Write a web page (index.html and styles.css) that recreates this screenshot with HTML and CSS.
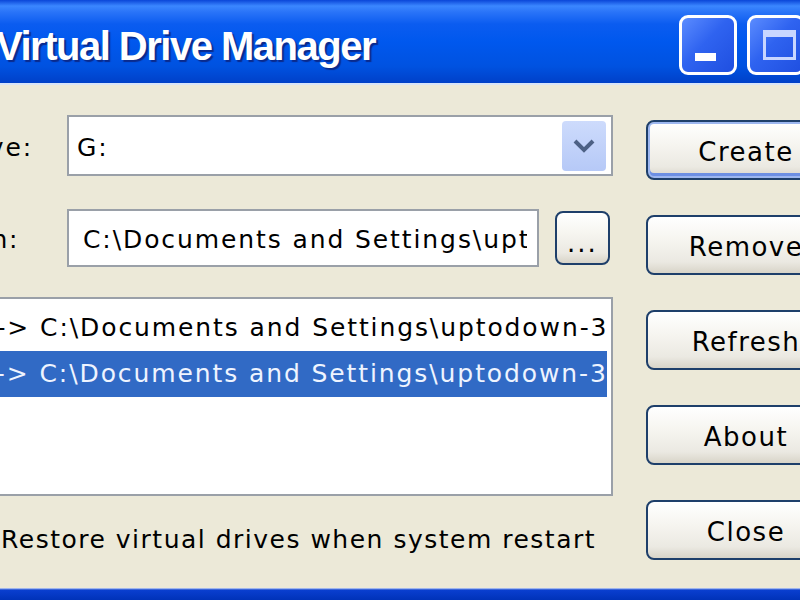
FILE: index.html
```html
<!DOCTYPE html>
<html>
<head>
<meta charset="utf-8">
<link rel="stylesheet" href="styles.css">
</head>
<body>
<div class="window">
  <div class="titlebar">
    <div class="title">Virtual Drive Manager</div>
    <div class="tb-buttons">
      <div class="tb-btn"><span class="min-glyph"></span></div>
      <div class="tb-btn"><span class="max-glyph"></span></div>
      <div class="tb-btn tb-close"></div>
    </div>
  </div>
  <div class="client">
    <div class="form">
      <div class="row row-drive">
        <span class="label">Drive:</span>
        <div class="combo">
          <span class="combo-text">G:</span>
          <span class="drop-btn">
            <svg width="22" height="14" viewBox="0 0 22 14"><path d="M2 2 L11 11 L20 2" fill="none" stroke="#4d6185" stroke-width="4"/></svg>
          </span>
        </div>
      </div>
      <div class="row row-path">
        <span class="label">Path:</span>
        <div class="textbox"><span class="tb-text">C:\Documents and Settings\uptodown-3</span></div>
        <div class="xpbtn small-btn"><span class="dots">...</span></div>
      </div>
      <div class="listbox">
        <div class="item">G: -&gt; C:\Documents and Settings\uptodown-3</div>
        <div class="item selected">H: -&gt; C:\Documents and Settings\uptodown-3</div>
      </div>
      <div class="check-row">
        <span class="checkbox"></span>
        <span class="check-text">Restore virtual drives when system restart</span>
      </div>
    </div>
    <div class="buttons">
      <div class="xpbtn default">Create</div>
      <div class="xpbtn">Remove</div>
      <div class="xpbtn">Refresh</div>
      <div class="xpbtn">About</div>
      <div class="xpbtn">Close</div>
    </div>
  </div>
  <div class="bottom-border"></div>
</div>
</body>
</html>
```
FILE: styles.css
```css
html, body {
  margin: 0;
  padding: 0;
}
body {
  width: 800px;
  height: 600px;
  overflow: hidden;
  background: #ece9d8;
  font-family: "DejaVu Sans", "Liberation Sans", sans-serif;
}
.window {
  width: 950px;
  height: 600px;
  margin-left: -70px;
  display: flex;
  flex-direction: column;
}
.titlebar {
  height: 85px;
  flex: none;
  display: flex;
  align-items: flex-start;
  background: linear-gradient(to bottom, #0a46d8 0px, #3b87ff 6px, #2a74f8 12px, #0b5cf0 24px, #0058ee 50%, #0052e0 80%, #0040c8 100%);
  border-bottom: 2px solid #d8e4f8;
  box-sizing: border-box;
}
.title {
  margin-left: 66px;
  margin-top: 24px;
  font-family: "Liberation Sans", "DejaVu Sans", sans-serif;
  font-weight: bold;
  font-size: 40px;
  letter-spacing: -1.5px;
  color: #ffffff;
  text-shadow: 2px 2px 1px #0a2a8c;
}
.tb-buttons {
  margin-left: auto;
  margin-top: 15px;
  margin-right: 7px;
  display: flex;
  gap: 10px;
}
.tb-btn {
  width: 58px;
  height: 60px;
  box-sizing: border-box;
  border: 3px solid #ffffff;
  border-radius: 9px;
  background: linear-gradient(to bottom right, #5b8cff 0%, #2f63f0 45%, #1f4fe0 100%);
  position: relative;
}
.min-glyph {
  position: absolute;
  left: 13px;
  top: 35px;
  width: 21px;
  height: 8px;
  background: #ffffff;
}
.max-glyph {
  position: absolute;
  left: 13px;
  top: 12px;
  width: 33px;
  height: 30px;
  box-sizing: border-box;
  border: 3px solid #c8d6ff;
  border-top-width: 7px;
}
.tb-close {
  background: linear-gradient(to bottom right, #e8866a, #c6421d);
}
.client {
  flex: 1;
  display: flex;
  background: #ece9d8;
  padding-top: 30px;
  box-sizing: border-box;
}
.form {
  margin-left: 17px;
  width: 666px;
  flex: none;
  display: flex;
  flex-direction: column;
}
.row {
  display: flex;
  align-items: center;
}
.label {
  width: 120px;
  flex: none;
  font-size: 25px;
  letter-spacing: 1.8px;
  color: #000;
  padding-top: 3px;
}
.combo {
  width: 546px;
  height: 61px;
  box-sizing: border-box;
  border: 2px solid #9aa0a8;
  background: #ffffff;
  display: flex;
  align-items: center;
  padding: 0 5px 0 8px;
}
.combo-text {
  flex: 1;
  font-size: 25px;
  letter-spacing: 1.8px;
  padding-top: 4px;
}
.drop-btn {
  width: 44px;
  height: 50px;
  border-radius: 4px;
  background: linear-gradient(to bottom, #cddbfc, #b6c9f7);
  display: flex;
  align-items: center;
  justify-content: center;
}
.row-path {
  margin-top: 33px;
}
.textbox {
  width: 472px;
  height: 58px;
  box-sizing: border-box;
  border: 2px solid #9aa0a8;
  background: #fff;
  overflow: hidden;
  display: flex;
  align-items: center;
  padding-left: 14px;
  padding-right: 10px;
  white-space: nowrap;
  font-size: 25px;
  letter-spacing: 1.9px;
}
.tb-text {
  overflow: hidden;
  padding-top: 3px;
}
.xpbtn {
  box-sizing: border-box;
  border: 2px solid #1e3f6a;
  border-radius: 8px;
  background: linear-gradient(to bottom, #ffffff 0%, #f6f5f0 40%, #ebe9e2 80%, #d8d4c8 100%);
  display: flex;
  align-items: center;
  justify-content: center;
  font-size: 26px;
  letter-spacing: 1.5px;
  color: #000;
  padding-top: 3px;
}
.small-btn {
  width: 55px;
  height: 54px;
  margin-left: 16px;
}
.dots {
  letter-spacing: 2px;
  margin-top: 6px;
}
.listbox {
  margin-top: 30px;
  height: 199px;
  box-sizing: border-box;
  border: 2px solid #9aa0a8;
  background: #fff;
  padding: 6px 4px 0 0;
  overflow: hidden;
}
.item {
  height: 46px;
  line-height: 46px;
  white-space: nowrap;
  padding-left: 6px;
  font-size: 25px;
  letter-spacing: 1.9px;
  color: #000;
}
.item.selected {
  background: #316ac5;
  color: #eef4ff;
}
.check-row {
  margin-top: 26px;
  display: flex;
  align-items: center;
}
.checkbox {
  width: 28px;
  height: 28px;
  box-sizing: border-box;
  border: 2px solid #1c5180;
  background: #f4f4f0;
  margin-right: 26px;
}
.check-text {
  font-size: 25px;
  letter-spacing: 1.5px;
  padding-top: 3px;
}
.buttons {
  margin-left: 33px;
  margin-top: 5px;
  display: flex;
  flex-direction: column;
  gap: 35px;
}
.buttons .xpbtn {
  width: 200px;
  height: 60px;
}
.xpbtn.default {
  box-shadow: inset 0 0 0 2px #9db7f0, inset 0 -3px 0 2px #6d8fe3;
}
.bottom-border {
  height: 12px;
  flex: none;
  background: linear-gradient(to bottom, #d0dcf6 0px, #0a3fd0 2px, #0032b8 100%);
}
```
